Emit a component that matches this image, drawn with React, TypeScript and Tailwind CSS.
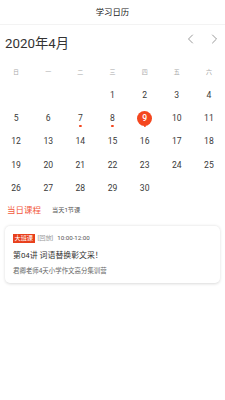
import React from "react";

const font = { fontFamily: '"Roboto", "Noto Sans CJK SC", sans-serif' };

const weekdays = ["日", "一", "二", "三", "四", "五", "六"];
const marked = [7, 8, 9];
const today = 9;

function Chevron({ dir }: { dir: "left" | "right" }) {
  return (
    <svg width="7" height="10" viewBox="0 0 7 10" fill="none">
      <path
        d={dir === "left" ? "M5.5 1 L1.5 5 L5.5 9" : "M1.5 1 L5.5 5 L1.5 9"}
        stroke="#9a9a9a"
        strokeWidth="1"
        strokeLinecap="round"
        strokeLinejoin="round"
      />
    </svg>
  );
}

export default function App() {
  const cells: (number | null)[] = [null, null, null];
  for (let d = 1; d <= 30; d++) cells.push(d);

  return (
    <div className="w-[225px] h-[400px] bg-white text-[#333]" style={font}>
      {/* Title bar */}
      <div className="h-[25px] flex items-center justify-center border-b border-[#f3f3f3] text-[8.4px] text-[#222]">
        学习日历
      </div>

      {/* Month header */}
      <div className="h-[35px] flex items-center justify-between pl-[5px] pr-[7px]">
        <span className="text-[13.3px] text-[#333] mt-[2px]">2020年4月</span>
        <div className="flex items-center gap-[17px] -mt-[7px]">
          <Chevron dir="left" />
          <Chevron dir="right" />
        </div>
      </div>

      {/* Calendar */}
      <div className="grid grid-cols-7">
        {weekdays.map(w => (
          <div key={w} className="h-[23.4px] flex items-center justify-center text-[6px] text-[#aaa]">
            {w}
          </div>
        ))}
        {cells.map((d, i) => (
          <div key={i} className="h-[23.4px] relative flex items-center justify-center">
            {d !== null && (
              d === today ? (
                <div className="w-[15px] h-[15px] rounded-full bg-[#f4471f] flex items-center justify-center text-[8.6px] font-medium text-white">
                  {d}
                </div>
              ) : (
                <span className="text-[8.6px] text-[#3a3a3a]">{d}</span>
              )
            )}
            {d !== null && marked.includes(d) && (
              <span className="absolute left-1/2 -translate-x-1/2 top-[18.5px] w-[2.2px] h-[2.2px] rounded-full bg-[#f4471f]" />
            )}
          </div>
        ))}
      </div>

      {/* Today's courses */}
      <div className="h-[20px] flex items-center pl-[7px] gap-[11px]">
        <span className="text-[8.5px] text-[#f2583b]">当日课程</span>
        <span className="text-[6.2px] text-[#555]">当天1节课</span>
      </div>

      <div className="mx-[5px] mt-[6px] h-[57px] rounded-[5px] bg-white shadow-[0_0.5px_3px_rgba(0,0,0,0.15)] px-[8px] pt-[8px]">
        <div className="flex items-center h-[9px] text-[6.2px]">
          <span className="bg-[#e8401c] text-white px-[1.5px] leading-[9px]">大班课</span>
          <span className="text-[#999] ml-[3px]">[回放]</span>
          <span className="text-[#555] ml-[4px]">10:00-12:00</span>
        </div>
        <div className="mt-[8px] text-[7.9px] text-[#333] leading-[10px]">第04讲 词语替换彰文采！</div>
        <div className="mt-[6px] text-[6.45px] text-[#666] leading-[8px]">君卿老师4天小学作文高分集训营</div>
      </div>
    </div>
  );
}
